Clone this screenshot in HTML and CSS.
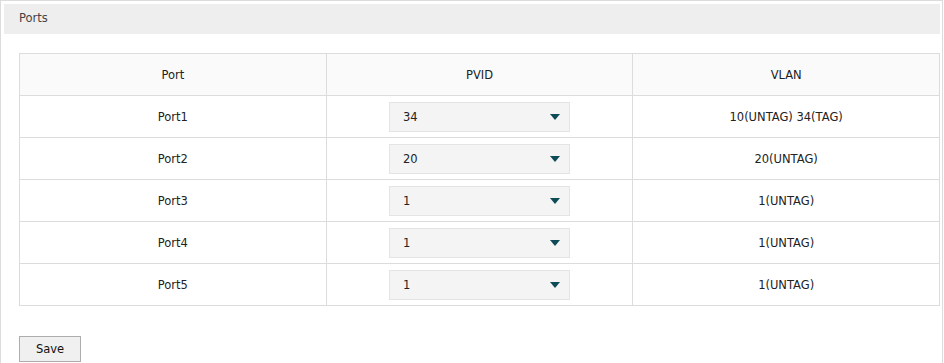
FILE: index.html
```html
<!DOCTYPE html>
<html lang="en">
<head>
    <meta charset="UTF-8">
    <meta name="viewport" content="width=device-width, initial-scale=1.0">
    <title>Ports</title>
    <link rel="stylesheet" href="styles.css">
</head>
<body>
    <div class="panel">
        <div class="panel-title">Ports</div>
        <div class="panel-body">
            <table class="port-table">
                <thead>
                    <tr>
                        <th>Port</th>
                        <th>PVID</th>
                        <th>VLAN</th>
                    </tr>
                </thead>
                <tbody>
                    <tr>
                        <td>Port1</td>
                        <td><div class="combo"><select><option>34</option></select></div></td>
                        <td>10(UNTAG) 34(TAG)</td>
                    </tr>
                    <tr>
                        <td>Port2</td>
                        <td><div class="combo"><select><option>20</option></select></div></td>
                        <td>20(UNTAG)</td>
                    </tr>
                    <tr>
                        <td>Port3</td>
                        <td><div class="combo"><select><option>1</option></select></div></td>
                        <td>1(UNTAG)</td>
                    </tr>
                    <tr>
                        <td>Port4</td>
                        <td><div class="combo"><select><option>1</option></select></div></td>
                        <td>1(UNTAG)</td>
                    </tr>
                    <tr>
                        <td>Port5</td>
                        <td><div class="combo"><select><option>1</option></select></div></td>
                        <td>1(UNTAG)</td>
                    </tr>
                </tbody>
            </table>
            <button type="button" class="save-btn">Save</button>
        </div>
    </div>
</body>
</html>
```

FILE: styles.css
```css
body {
    margin: 0;
    font-family: "DejaVu Sans", Verdana, sans-serif;
    font-size: 11.5px;
    color: #222;
    background: #fff;
}
.panel {
    box-sizing: border-box;
    width: 943px;
    height: 363px;
    border: 1px solid #dcdcdc;
    border-bottom: none;
    padding: 3px 2px 0 3px;
}
.panel-title {
    height: 30px;
    line-height: 29px;
    background: #eeeeee;
    color: #444;
    padding-left: 15px;
}
.panel-body {
    padding: 19px 0 0 15px;
}
.port-table {
    width: 100%;
    border-collapse: collapse;
    table-layout: fixed;
}
.port-table th,
.port-table td {
    border: 1px solid #dcdcdc;
    height: 41px;
    padding: 0;
    text-align: center;
    vertical-align: middle;
    font-weight: normal;
}
.port-table th {
    background: #fafafa;
}
.combo {
    position: relative;
    width: 181px;
    height: 30px;
    margin: 0 auto;
}
.combo select {
    -webkit-appearance: none;
    appearance: none;
    box-sizing: border-box;
    width: 100%;
    height: 100%;
    background: #f4f4f4;
    border: 1px solid #e4e4e4;
    border-radius: 0;
    padding: 0 0 0 13px;
    font-family: inherit;
    font-size: 11.5px;
    color: #222;
    outline: none;
}
.combo::after {
    content: "";
    position: absolute;
    right: 10px;
    top: 12px;
    border-left: 5px solid transparent;
    border-right: 5px solid transparent;
    border-top: 6px solid #0d4b57;
    pointer-events: none;
}
.save-btn {
    margin-top: 30px;
    width: 62px;
    height: 26px;
    background: #f0f0f0;
    border: 1px solid #adadad;
    border-radius: 0;
    font-family: inherit;
    font-size: 11.5px;
    color: #111;
    padding: 0;
}
```
